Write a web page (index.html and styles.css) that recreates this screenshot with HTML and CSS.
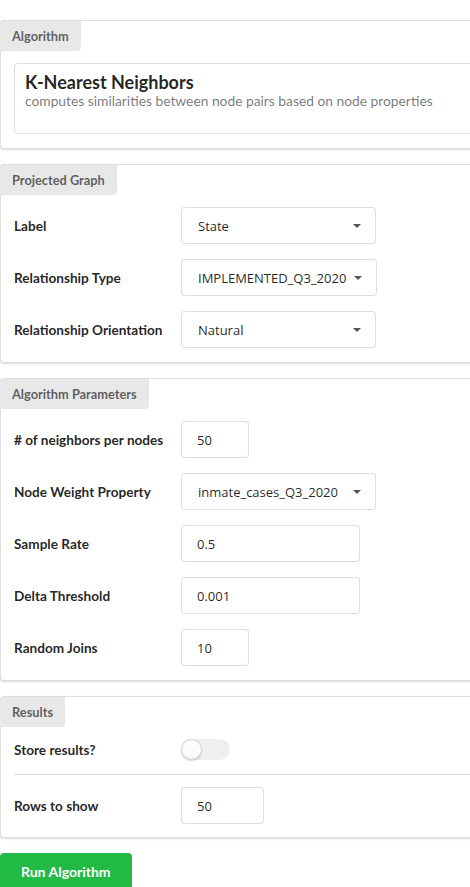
FILE: index.html
```html
<!DOCTYPE html>
<html>
<head>
<meta charset="utf-8">
<link rel="stylesheet" href="styles.css">
</head>
<body>
<div class="page">
  <section class="card">
    <div class="tag">Algorithm</div>
    <div class="card-body">
      <div class="algo-box">
        <div class="algo-title">K-Nearest Neighbors</div>
        <div class="algo-desc">computes similarities between node pairs based on node properties</div>
      </div>
    </div>
  </section>

  <section class="card">
    <div class="tag">Projected Graph</div>
    <div class="card-body fields">
      <div class="field">
        <div class="field-label">Label</div>
        <div class="dropdown"><span class="value">State</span><span class="caret"></span></div>
      </div>
      <div class="field">
        <div class="field-label">Relationship Type</div>
        <div class="dropdown"><span class="value">IMPLEMENTED_Q3_2020</span><span class="caret"></span></div>
      </div>
      <div class="field">
        <div class="field-label">Relationship Orientation</div>
        <div class="dropdown"><span class="value">Natural</span><span class="caret"></span></div>
      </div>
    </div>
  </section>

  <section class="card">
    <div class="tag">Algorithm Parameters</div>
    <div class="card-body fields">
      <div class="field">
        <div class="field-label"># of neighbors per nodes</div>
        <div class="input input-s">50</div>
      </div>
      <div class="field">
        <div class="field-label">Node Weight Property</div>
        <div class="dropdown"><span class="value">inmate_cases_Q3_2020</span><span class="caret"></span></div>
      </div>
      <div class="field">
        <div class="field-label">Sample Rate</div>
        <div class="input input-l">0.5</div>
      </div>
      <div class="field">
        <div class="field-label">Delta Threshold</div>
        <div class="input input-l">0.001</div>
      </div>
      <div class="field">
        <div class="field-label">Random Joins</div>
        <div class="input input-s">10</div>
      </div>
    </div>
  </section>

  <section class="card card-last">
    <div class="tag">Results</div>
    <div class="card-body">
      <div class="field toggle-field">
        <div class="field-label">Store results?</div>
        <div class="toggle"><span class="knob"></span></div>
      </div>
      <div class="divider"></div>
      <div class="field">
        <div class="field-label">Rows to show</div>
        <div class="input input-m">50</div>
      </div>
    </div>
  </section>

  <button class="run">Run Algorithm</button>
</div>
</body>
</html>
```

FILE: styles.css
```css
html, body {
  margin: 0;
  padding: 0;
  background: #ffffff;
  overflow: hidden;
}

body {
  font-family: Lato, "Helvetica Neue", Arial, sans-serif;
  color: rgba(0, 0, 0, 0.87);
}

.page {
  width: 520px;
  padding-top: 20px;
  display: flex;
  flex-direction: column;
  align-items: flex-start;
  gap: 15px;
}

.card {
  align-self: stretch;
  background: #fff;
  border: 1px solid rgba(34, 36, 38, 0.15);
  border-radius: 4px;
  box-shadow: 0 1px 2px 0 rgba(34, 36, 38, 0.15);
  padding: 0 0 14px 0;
}

.card-last {
  padding-bottom: 13px;
}

.tag {
  display: inline-block;
  height: 30px;
  line-height: 30px;
  padding: 0 12px;
  margin-left: -1px;
  background: #e8e8e8;
  color: rgba(0, 0, 0, 0.62);
  font-size: 12.8px;
  font-weight: 700;
  border-radius: 4px 0 4px 0;
}

.card-body {
  margin-top: 12px;
  padding-left: 13px;
}

.algo-box {
  border: 1px solid rgba(34, 36, 38, 0.15);
  border-radius: 4px;
  padding: 7px 10px 24px;
}

.algo-title {
  font-size: 18px;
  font-weight: 700;
  color: rgba(0, 0, 0, 0.87);
}

.algo-desc {
  font-size: 13.8px;
  line-height: 16px;
  color: rgba(0, 0, 0, 0.55);
}

.fields {
  display: flex;
  flex-direction: column;
  gap: 15px;
}

.field {
  display: flex;
  align-items: center;
}

.field-label {
  width: 167px;
  flex: none;
  font-size: 13.6px;
  font-weight: 700;
  color: rgba(0, 0, 0, 0.87);
}

.dropdown,
.input {
  box-sizing: border-box;
  height: 37px;
  border: 1px solid rgba(34, 36, 38, 0.15);
  border-radius: 4px;
  display: flex;
  align-items: center;
  font-family: "Open Sans", "Noto Sans", sans-serif;
  font-size: 13px;
  color: rgba(0, 0, 0, 0.87);
  background: #fff;
}

.dropdown {
  min-width: 195px;
  padding: 0 14px 0 16px;
  gap: 8px;
}

.dropdown .caret {
  margin-left: auto;
  width: 0;
  height: 0;
  border-left: 4px solid transparent;
  border-right: 4px solid transparent;
  border-top: 4px solid #555;
}

.input {
  padding-left: 15px;
}

.input-s { width: 68px; }
.input-m { width: 83px; }
.input-l { width: 179px; }

.toggle {
  position: relative;
  width: 49px;
  height: 21px;
  border-radius: 11px;
  background: #efefef;
}

.toggle .knob {
  position: absolute;
  left: 0;
  top: 0;
  width: 21px;
  height: 21px;
  border-radius: 50%;
  background: linear-gradient(#fff, #f8f8f8);
  box-shadow: 0 1px 2px 0 rgba(34, 36, 38, 0.2), inset 0 0 0 1px rgba(34, 36, 38, 0.18);
}

.divider {
  height: 1px;
  background: rgba(34, 36, 38, 0.15);
  margin: 14px 0 12px;
}

.run {
  height: 37px;
  padding: 0 21px;
  border: none;
  border-radius: 4px;
  background: #21ba45;
  color: #fff;
  font-family: Lato, "Helvetica Neue", Arial, sans-serif;
  font-size: 14px;
  font-weight: 700;
}
```
